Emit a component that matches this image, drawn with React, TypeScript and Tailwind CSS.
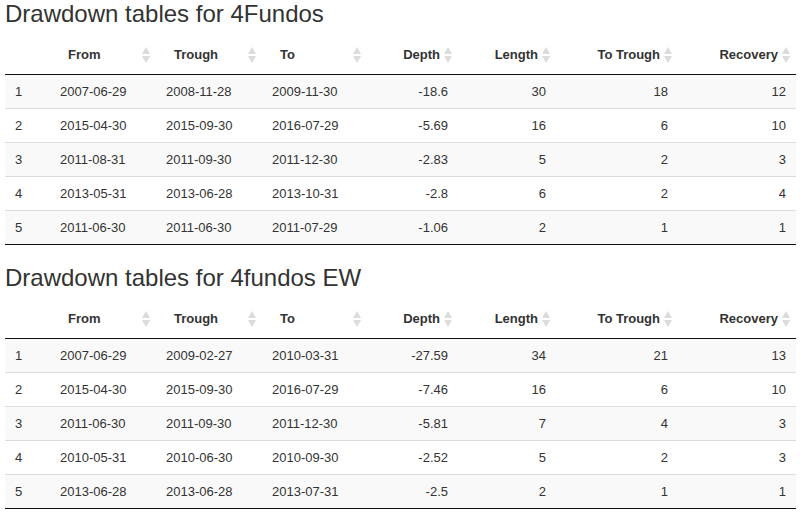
const columns = [
  { label: "", width: "w-[45px]", align: "left", sort: false },
  { label: "From", width: "w-[106px]", align: "left", sort: true },
  { label: "Trough", width: "w-[106px]", align: "left", sort: true },
  { label: "To", width: "w-[105px]", align: "left", sort: true },
  { label: "Depth", width: "w-[91px]", align: "right", sort: true },
  { label: "Length", width: "w-[98px]", align: "right", sort: true },
  { label: "To Trough", width: "w-[122px]", align: "right", sort: true },
  { label: "Recovery", width: "w-[118px]", align: "right", sort: true },
];

const tables = [
  {
    title: "Drawdown tables for 4Fundos",
    rows: [
      ["1", "2007-06-29", "2008-11-28", "2009-11-30", "-18.6", "30", "18", "12"],
      ["2", "2015-04-30", "2015-09-30", "2016-07-29", "-5.69", "16", "6", "10"],
      ["3", "2011-08-31", "2011-09-30", "2011-12-30", "-2.83", "5", "2", "3"],
      ["4", "2013-05-31", "2013-06-28", "2013-10-31", "-2.8", "6", "2", "4"],
      ["5", "2011-06-30", "2011-06-30", "2011-07-29", "-1.06", "2", "1", "1"],
    ],
  },
  {
    title: "Drawdown tables for 4fundos EW",
    rows: [
      ["1", "2007-06-29", "2009-02-27", "2010-03-31", "-27.59", "34", "21", "13"],
      ["2", "2015-04-30", "2015-09-30", "2016-07-29", "-7.46", "16", "6", "10"],
      ["3", "2011-06-30", "2011-09-30", "2011-12-30", "-5.81", "7", "4", "3"],
      ["4", "2010-05-31", "2010-06-30", "2010-09-30", "-2.52", "5", "2", "3"],
      ["5", "2013-06-28", "2013-06-28", "2013-07-31", "-2.5", "2", "1", "1"],
    ],
  },
];

const SortIcon = () => (
  <svg width="8" height="17" viewBox="0 0 8 17" className="absolute right-[6px] top-[13px]">
    <path d="M4 0 L8 7 L0 7 Z" fill="#dcdcdc" />
    <path d="M0 9 L8 9 L4 16 Z" fill="#dcdcdc" />
  </svg>
);

const DrawdownTable = ({ title, rows }: { title: string; rows: string[][] }) => (
  <section>
    <h3 className="h-[34px] text-[24px] leading-[28px] font-normal text-[#333]">{title}</h3>
    <table className="table-fixed border-collapse w-[791px] text-[13px] text-[#333]">
      <thead>
        <tr className="border-b border-[#111]">
          {columns.map((c, i) => (
            <th
              key={i}
              className={`${c.width} relative h-[40px] px-[18px] pt-[2px] leading-[20px] font-bold ${
                c.align === "right" ? "text-right" : "text-left"
              }`}
            >
              {c.label}
              {c.sort && <SortIcon />}
            </th>
          ))}
        </tr>
      </thead>
      <tbody>
        {rows.map((r, ri) => (
          <tr key={ri} className={`${ri % 2 === 0 ? "bg-[#f9f9f9]" : "bg-white"} ${ri > 0 ? "border-t border-[#ddd]" : ""}`}>
            {r.map((v, ci) => (
              <td
                key={ci}
                className={`h-[34px] px-[10px] pt-[1px] leading-[17px] ${columns[ci].align === "right" ? "text-right" : "text-left"}`}
              >
                {v}
              </td>
            ))}
          </tr>
        ))}
      </tbody>
    </table>
    <div className="h-px w-[791px] bg-[#111]" />
  </section>
);

export default function App() {
  return (
    <div className="min-h-[516px] bg-white pl-[5px] font-['Liberation_Sans',Arial,sans-serif]">
      <div className="flex flex-col gap-[19px]">
        {tables.map((t) => (
          <DrawdownTable key={t.title} title={t.title} rows={t.rows} />
        ))}
      </div>
    </div>
  );
}
